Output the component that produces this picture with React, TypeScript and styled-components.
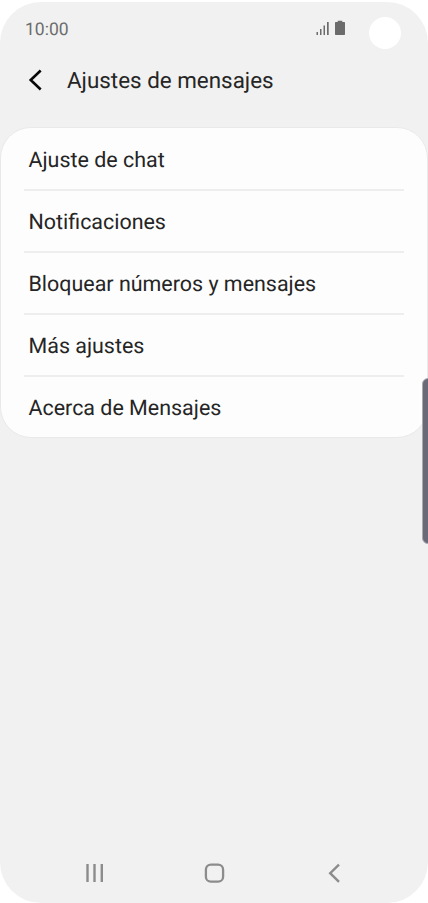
import React from 'react';
import styled, { createGlobalStyle } from 'styled-components';

const GlobalStyle = createGlobalStyle`
  * { box-sizing: border-box; }
  body {
    margin: 0;
    background: #fff;
    font-family: Roboto, "Liberation Sans", sans-serif;
    text-rendering: geometricPrecision;
  }
`;

const Phone = styled.main`
  position: relative;
  display: flex;
  flex-direction: column;
  width: 428px;
  height: 901px;
  margin-top: 2px;
  border-radius: 41px;
  background: #f1f1f1;
  overflow: hidden;
`;

const StatusBar = styled.div`
  display: flex;
  align-items: center;
  height: 54px;
  padding: 0 27px 0 25px;
`;

const Clock = styled.time`
  flex: 1;
  color: #6c6c6c;
  font-size: 17.5px;
  line-height: 20px;
  margin-top: 1px;
`;

const StatusIcons = styled.svg`
  display: block;
  margin: 0 23px 3px 0;
`;

const CameraHole = styled.div`
  width: 32px;
  height: 32px;
  margin-top: 8px;
  border-radius: 50%;
  background: #fff;
`;

const Header = styled.header`
  display: flex;
  align-items: center;
  height: 48px;
  padding-left: 26px;
`;

const BackButton = styled.button`
  display: flex;
  width: 41px;
  padding: 0 0 1px;
  border: 0;
  background: none;
`;

const Title = styled.h1`
  margin: 2px 0 0;
  color: #252525;
  font-size: 22.4px;
  font-weight: 400;
  line-height: 28px;
`;

const Card = styled.ul`
  height: 311px;
  margin: 23px 0 0;
  padding: 0 23px;
  border: 1px solid #e9e9e9;
  border-radius: 31px;
  background: #fdfdfd;
  list-style: none;
`;

const Item = styled.li`
  display: flex;
  align-items: center;
  height: 62.1px;
  padding: 4px 4.5px 0;
  color: #252525;
  font-size: 21.45px;
  line-height: 28px;

  &:first-child {
    height: 61px;
    padding-top: 5px;
  }

  & + & {
    border-top: 2px solid #eeeeee;
  }
`;

const EdgeHandle = styled.div`
  position: absolute;
  top: 376px;
  right: -6px;
  width: 12px;
  height: 166px;
  border: 1px solid #a9a9b3;
  border-radius: 6px;
  background: #696977;
`;

const NavBar = styled.nav`
  display: flex;
  justify-content: space-between;
  align-items: center;
  height: 60px;
  margin-top: auto;
  padding: 0 82px;
`;

const NavButton = styled.button`
  display: flex;
  padding: 0;
  border: 0;
  background: none;
`;

const items = [
  'Ajuste de chat',
  'Notificaciones',
  'Bloquear números y mensajes',
  'Más ajustes',
  'Acerca de Mensajes',
];

export default function App() {
  return (
    <>
      <GlobalStyle />
      <Phone>
        <StatusBar>
          <Clock>10:00</Clock>
          <StatusIcons width="30" height="16" viewBox="0 0 30 16" fill="#6b6b6b">
            <path d="M.5 12h1.5v3H.5zM4 9h1.5v6H4zM7.5 5.5H9V15H7.5zM11 2h1.7v13H11z" />
            <path d="M19.7 2h2V.8h4.6V2h2q.7 0 .7.7v11.6q0 .7-.7.7h-8.6q-.7 0-.7-.7V2.7q0-.7.7-.7z" />
          </StatusIcons>
          <CameraHole />
        </StatusBar>
        <Header>
          <BackButton aria-label="Volver">
            <svg width="20" height="24" viewBox="0 0 20 24" fill="none" stroke="#090909" strokeWidth="2.6">
              <path d="M14.7 2.5L4.7 12l10 9.5" />
            </svg>
          </BackButton>
          <Title>Ajustes de mensajes</Title>
        </Header>
        <Card>
          {items.map((item) => (
            <Item key={item}>{item}</Item>
          ))}
        </Card>
        <NavBar>
          <NavButton aria-label="Recientes">
            <svg width="24" height="24" viewBox="0 0 24 24" fill="none" stroke="#8c8c8c" strokeWidth="2.4">
              <path d="M5.5 3v18M12.5 3v18M19.8 3v18" />
            </svg>
          </NavButton>
          <NavButton aria-label="Inicio">
            <svg width="24" height="24" viewBox="0 0 24 24" fill="none" stroke="#8c8c8c" strokeWidth="2.3">
              <rect x="3.9" y="3.7" width="17.2" height="17" rx="5" />
            </svg>
          </NavButton>
          <NavButton aria-label="Atrás">
            <svg width="24" height="24" viewBox="0 0 24 24" fill="none" stroke="#8c8c8c" strokeWidth="2.4">
              <path d="M17 3.6L8.2 12.2l8.8 8.6" />
            </svg>
          </NavButton>
        </NavBar>
        <EdgeHandle />
      </Phone>
    </>
  );
}
